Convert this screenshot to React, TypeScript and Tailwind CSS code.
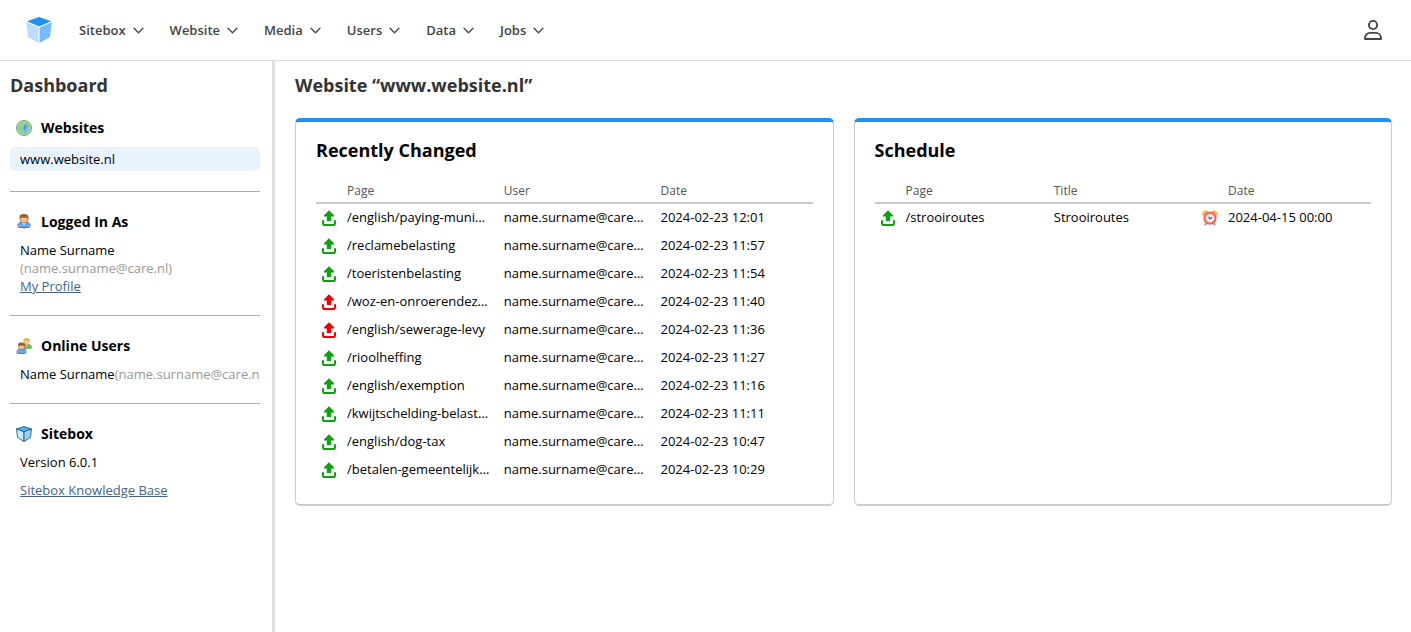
import React from 'react'

const menuItems = ['Sitebox', 'Website', 'Media', 'Users', 'Data', 'Jobs']

const changes = [
  { page: '/english/paying-municipal-taxes', date: '2024-02-23 12:01', online: true },
  { page: '/reclamebelasting', date: '2024-02-23 11:57', online: true },
  { page: '/toeristenbelasting', date: '2024-02-23 11:54', online: true },
  { page: '/woz-en-onroerendezaakbelasting', date: '2024-02-23 11:40', online: false },
  { page: '/english/sewerage-levy', date: '2024-02-23 11:36', online: false },
  { page: '/rioolheffing', date: '2024-02-23 11:27', online: true },
  { page: '/english/exemption', date: '2024-02-23 11:16', online: true },
  { page: '/kwijtschelding-belastingen', date: '2024-02-23 11:11', online: true },
  { page: '/english/dog-tax', date: '2024-02-23 10:47', online: true },
  { page: '/betalen-gemeentelijke-belastingen', date: '2024-02-23 10:29', online: true },
]

function Logo() {
  return (
    <svg width="26" height="27" viewBox="0 0 26 27">
      <path d="M13 0 L25 4.2 L13 9.6 L1 4.2 Z" fill="#1e90ff" />
      <path d="M0.3 5 L12.5 10.6 V26 L2 20 Z" fill="#badcff" />
      <path d="M25.7 5 L13.5 10.6 V26 L24 20 Z" fill="#78bbff" />
    </svg>
  )
}

function Chevron() {
  return (
    <svg width="11" height="7" viewBox="0 0 11 7" fill="none" stroke="#444" strokeWidth="1.3" strokeLinecap="round" strokeLinejoin="round">
      <path d="M1 1.2 L5.5 5.8 L10 1.2" />
    </svg>
  )
}

function AccountIcon() {
  return (
    <svg width="18" height="20" viewBox="0 0 18 20" fill="none" stroke="#444" strokeWidth="1.9" strokeLinejoin="round">
      <circle cx="9" cy="5" r="4.1" />
      <path d="M1 19 V18 C1 15 3.2 12.9 6.2 12.9 H11.8 C14.8 12.9 17 15 17 18 V19 Z" />
    </svg>
  )
}

function GlobeIcon() {
  return (
    <svg width="16" height="16" viewBox="0 0 16 16">
      <circle cx="8" cy="8" r="7.4" fill="#c5e8b8" stroke="#56a04b" />
      <circle cx="8" cy="8" r="6.1" fill="#86c3ea" />
      <path d="M3 4.6 C4.5 2.4 6.4 1.9 8.6 2.2 L8 4.1 L6.4 5 L6.8 6.6 L5 7.4 L6.6 9 L6.2 11 L5.2 12.8 C3 11.5 1.6 8 3 4.6 Z" fill="#93d478" />
      <path d="M8.6 4.4 L11 5.4 L10.4 8 L9 10.6 L7.4 9 L8 7 Z" fill="#4a98d4" />
      <path d="M10 2.6 L12.6 4 L13.6 7 L12.6 8.4 L11 5.6 Z M8 11 L11.4 10.6 L10 13.2 L8 13.8 Z" fill="#85cb6a" />
    </svg>
  )
}

function UserIcon() {
  return (
    <svg width="16" height="16" viewBox="0 0 16 16">
      <path d="M1.7 13 C1.2 10.6 3 8.6 5 8.4 H11 C13 8.6 14.8 10.6 14.3 13 Q8 14.8 1.7 13 Z" fill="#62a8f5" stroke="#2f6cc4" strokeWidth="0.9" />
      <path d="M1.2 11.2 H3.2 V13.4 H1.2 Z M12.8 11.2 H14.8 V13.4 H12.8 Z" fill="#f3b279" />
      <path d="M5.5 8.6 L8 11 L10.5 8.6 Z" fill="#e8f3ff" />
      <path d="M4.2 3.4 H11.8 V6 C11.8 8 10 9 8 9 C6 9 4.2 8 4.2 6 Z" fill="#f5bd8b" stroke="#a65d2b" strokeWidth="0.7" />
      <path d="M3.6 5.2 V2.6 C3.6 1 5 0 8 0 C11 0 12.4 1 12.4 2.6 V5.2 L11.2 3.6 H4.8 Z" fill="#9b5c2e" />
    </svg>
  )
}

function UsersIcon() {
  return (
    <svg width="16" height="16" viewBox="0 0 16 16">
      <path d="M7 10.5 V8.6 C7 7 9 6 11 6 C14 6 15.8 7.6 15.5 10 Q12 11.2 7 10.5 Z" fill="#76c464" stroke="#5aa850" strokeWidth="0.8" />
      <path d="M8 2.4 H13.2 V4.6 C13.2 7.4 8 7.4 8 4.6 Z" fill="#f8c795" />
      <path d="M7.4 4.2 V2 C7.4 0.8 8.6 0.3 10.6 0.3 C12.8 0.3 13.8 1 13.8 2.2 V4.4 L12.6 2.8 H8.8 Z" fill="#e6b034" />
      <path d="M0.6 15 C0.4 12.8 1.8 11.2 3.6 11 H7.6 C9.4 11.2 10.6 12.8 10.2 15 Q5.4 16.2 0.6 15 Z" fill="#62a8f5" stroke="#2f6cc4" strokeWidth="0.8" />
      <path d="M0.2 13 H1.8 V15.2 H0.2 Z M9 13 H10.6 V15.2 H9 Z" fill="#f3b279" />
      <path d="M2.8 7 H8.4 V9.6 C8.4 12.2 2.8 12.2 2.8 9.6 Z" fill="#f5bd8b" stroke="#b56c39" strokeWidth="0.6" />
      <path d="M2.2 8.8 V6.6 C2.2 5.2 3.4 4.6 5.6 4.6 C7.8 4.6 9 5.2 9 6.6 V8.8 L7.8 7.4 H3.4 Z" fill="#9b5c2e" />
    </svg>
  )
}

function BoxIcon() {
  return (
    <svg width="16" height="16" viewBox="0 0 16 16" stroke="#3b5a70" strokeWidth="0.9" strokeLinejoin="round">
      <path d="M8 0.6 L15.5 2.9 L8 5.8 L0.5 2.9 Z" fill="#43b4fb" />
      <path d="M0.5 2.9 L8 5.8 V15.5 L1.5 11.4 Z" fill="#c3e9ff" />
      <path d="M15.5 2.9 L8 5.8 V15.5 L14.5 11.4 Z" fill="#90d3fb" />
    </svg>
  )
}

function PublishIcon({ online }: { online: boolean }) {
  return (
    <svg width="14" height="16" viewBox="0 0 14 16" className={online ? 'text-[#0aa50a]' : 'text-[#ee0000]'} role="img" aria-label={online ? 'Published' : 'Unpublished'}>
      <path d="M7 0.2 L12 5.2 V6.4 H9.2 V11 H4.8 V6.4 H2 V5.2 Z" fill="currentColor" />
      <path d="M1 11 V13.2 Q1 15 2.8 15 H11.2 Q13 15 13 13.2 V11" fill="none" stroke="currentColor" strokeWidth="2" strokeLinecap="round" />
    </svg>
  )
}

function ClockIcon() {
  return (
    <svg width="16" height="16" viewBox="0 0 16 16">
      <path d="M3.6 12.6 L1.8 15.6 H4 L5.4 14 Z M12.4 12.6 L14.2 15.6 H12 L10.6 14 Z" fill="#a9a9a9" />
      <path d="M0.5 5 C0 2 2.4 0.2 5.4 0.8 L6 2 L2 5.6 Z M15.5 5 C16 2 13.6 0.2 10.6 0.8 L10 2 L14 5.6 Z" fill="#fbc04a" stroke="#eda22c" strokeWidth="0.5" />
      <circle cx="8" cy="8.2" r="5.5" fill="#f2f5f5" stroke="#f4625b" strokeWidth="2.2" />
      <circle cx="8" cy="8.2" r="4.2" fill="none" stroke="#f9aaa4" strokeWidth="0.8" />
      <path d="M6.6 6.6 L8 9 L10.2 7.2" fill="none" stroke="#555" strokeWidth="1.1" />
    </svg>
  )
}

function SectionTitle({ icon, children }: { icon: React.ReactNode; children: React.ReactNode }) {
  return (
    <h2 className="flex h-5 items-center gap-[9px] pl-[6px] text-sm font-bold text-black">
      {icon}
      {children}
    </h2>
  )
}

function Card({ title, children }: { title: string; children: React.ReactNode }) {
  return (
    <section className="min-w-0 rounded-[5px] border border-t-4 border-b-2 border-[#ccc] border-t-[#1e90ff] px-5 pt-[14px] pb-5">
      <h2 className="text-lg leading-7 font-bold text-black">{title}</h2>
      {children}
    </section>
  )
}

const th = 'border-b-2 border-[#ccc] p-0 pt-[2px] text-left text-xs font-medium text-[#555]'
const td = 'truncate p-0 pr-[14px] pb-[2px]'

export default function App() {
  return (
    <div className="flex min-h-screen flex-col bg-white font-['Open_Sans',sans-serif] text-[13px] leading-[18px] text-black">
      <header className="flex h-[61px] items-center border-b border-[#ddd] pr-[29px] pl-[26px]">
        <a href="#" aria-label="Home">
          <Logo />
        </a>
        <nav className="ml-[27px] flex gap-[26px]">
          {menuItems.map((item) => (
            <button key={item} className="flex items-center gap-[7px] font-semibold text-[#444]">
              {item}
              <Chevron />
            </button>
          ))}
        </nav>
        <button className="ml-auto" aria-label="Account">
          <AccountIcon />
        </button>
      </header>

      <div className="flex grow">
        {/* Sidebar */}
        <aside className="w-[275px] shrink-0 border-r-3 border-[#ddd] pt-[10px] pr-3 pl-[10px]">
          <h1 className="text-lg leading-7 font-bold text-[#333]">Dashboard</h1>

          <section className="mt-[19px] border-b border-[#aaa] pb-5">
            <SectionTitle icon={<GlobeIcon />}>Websites</SectionTitle>
            <a href="#" className="mt-[9px] block rounded-[5px] bg-[#e8f3ff] px-[10px] py-[3px]">www.website.nl</a>
          </section>

          <section className="border-b border-[#aaa] py-5">
            <SectionTitle icon={<UserIcon />}>Logged In As</SectionTitle>
            <div className="mt-[9px] pl-[10px]">
              <p>Name Surname</p>
              <p className="text-[#999]">(name.surname@care.nl)</p>
              <a href="#" className="block text-[#44638f] underline">My Profile</a>
            </div>
          </section>

          <section className="border-b border-[#aaa] py-5">
            <SectionTitle icon={<UsersIcon />}>Online Users</SectionTitle>
            <p className="mt-[9px] overflow-hidden pl-[10px] whitespace-nowrap">
              Name Surname<span className="text-[#999]">(name.surname@care.nl)</span>
            </p>
          </section>

          <section className="py-5">
            <SectionTitle icon={<BoxIcon />}>Sitebox</SectionTitle>
            <div className="mt-[9px] pl-[10px]">
              <p>Version 6.0.1</p>
              <a href="#" className="mt-[10px] block text-[#44638f] underline">Sitebox Knowledge Base</a>
            </div>
          </section>
        </aside>

        {/* Content */}
        <main className="min-w-0 grow pt-[10px] pr-[19px] pb-5 pl-5">
          <h1 className="text-lg leading-7 font-bold text-[#333]">Website “www.website.nl”</h1>

          <div className="mt-[19px] grid grid-cols-2 gap-5">
            <Card title="Recently Changed">
              <table className="mt-[13px] w-full table-fixed border-separate border-spacing-0">
                <thead>
                  <tr className="h-[27px]">
                    <th className="w-[31px] border-b-2 border-[#ccc] p-0"></th>
                    <th className={th}>Page</th>
                    <th className={th}>User</th>
                    <th className={`${th} w-[152px]`}>Date</th>
                  </tr>
                </thead>
                <tbody>
                  {changes.map((row) => (
                    <tr key={row.page} className="h-7">
                      <td className="p-0 pl-[6px]"><PublishIcon online={row.online} /></td>
                      <td className={td}>{row.page}</td>
                      <td className={td}>name.surname@care.nl</td>
                      <td className={td}>{row.date}</td>
                    </tr>
                  ))}
                </tbody>
              </table>
            </Card>

            <Card title="Schedule">
              <table className="mt-[13px] w-full table-fixed border-separate border-spacing-0">
                <thead>
                  <tr className="h-[27px]">
                    <th className="w-[31px] border-b-2 border-[#ccc] p-0"></th>
                    <th className={th}>Page</th>
                    <th className={th}>Title</th>
                    <th className="w-[26px] border-b-2 border-[#ccc] p-0"></th>
                    <th className={`${th} w-[143px]`}>Date</th>
                  </tr>
                </thead>
                <tbody>
                  <tr className="h-7">
                    <td className="p-0 pl-[6px]"><PublishIcon online /></td>
                    <td className={td}>/strooiroutes</td>
                    <td className={td}>Strooiroutes</td>
                    <td className="p-0"><ClockIcon /></td>
                    <td className={td}>2024-04-15 00:00</td>
                  </tr>
                </tbody>
              </table>
            </Card>
          </div>
        </main>
      </div>
    </div>
  )
}
